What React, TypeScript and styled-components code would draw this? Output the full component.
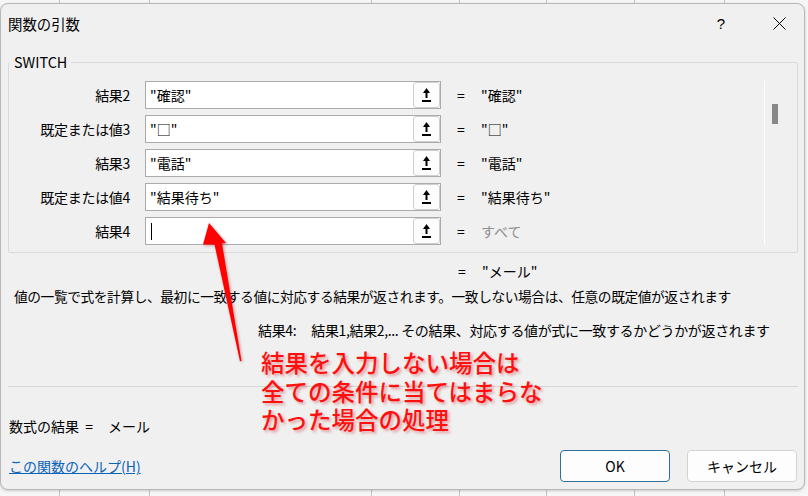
import React from "react";
import styled, { createGlobalStyle } from "styled-components";

const GlobalStyle = createGlobalStyle`
  html, body {
    margin: 0;
    padding: 0;
  }
  body {
    width: 808px;
    height: 496px;
    overflow: hidden;
    font-family: "Noto Sans CJK JP", "Noto Sans", sans-serif;
    color: #000;
  }
`;

// columns of the spreadsheet that shows behind the dialog
const sheetColumns = [59, 149, 371, 459, 546, 634, 724];
const sheetGrid = sheetColumns
  .map((x) => `linear-gradient(to right, transparent ${x}px, #c4c4c4 ${x}px, #c4c4c4 ${x + 1}px, transparent ${x + 1}px)`)
  .join(", ");

const Sheet = styled.div`
  width: 808px;
  height: 496px;
  box-sizing: border-box;
  padding: 3px 3px 6px 0;
  background-color: #f6f6f6;
  background-image: ${sheetGrid};
`;

const Dialog = styled.div`
  position: relative;
  width: 805px;
  height: 487px;
  box-sizing: border-box;
  display: flex;
  flex-direction: column;
  background: #f0f0f0;
  border: 1px solid #b8b8b8;
  border-radius: 8px;
  box-shadow: 0 1px 3px rgba(0, 0, 0, 0.18);
  overflow: hidden;
`;

const TitleBar = styled.div`
  height: 38px;
  display: flex;
  align-items: center;
  padding-left: 7px;
  flex-shrink: 0;
`;

const Title = styled.div`
  flex: 1;
  font-size: 14.4px;
`;

const CaptionButton = styled.div<{ $gap?: number }>`
  width: 46px;
  height: 38px;
  margin-right: ${(p) => p.$gap ?? 0}px;
  display: flex;
  align-items: center;
  justify-content: center;
  font-size: 15px;
  font-family: "Liberation Sans", sans-serif;
`;

const Body = styled.div`
  flex: 1;
  display: flex;
  flex-direction: column;
  padding: 0 6px 7px 7px;
  font-size: 14px;
`;

const Group = styled.fieldset`
  margin: 10px 0 0 0;
  padding: 0 0 7px 0;
  border: 1px solid #dadada;
  border-radius: 2px;
  min-width: 0;
`;

const Legend = styled.legend`
  margin-left: 1px;
  padding: 0 4px;
  font-size: 14.4px;
  line-height: 20px;
`;

const GroupInner = styled.div`
  display: flex;
  padding-top: 9px;
`;

const Rows = styled.div`
  flex: 1;
  display: flex;
  flex-direction: column;
  gap: 6px;
`;

const Row = styled.div`
  height: 28px;
  display: flex;
  align-items: center;
`;

const Label = styled.div`
  width: 121px;
  text-align: right;
  white-space: nowrap;
  letter-spacing: -0.3px;
`;

const Field = styled.div`
  margin-left: 15px;
  width: 296px;
  height: 28px;
  box-sizing: border-box;
  display: flex;
  align-items: center;
  background: #fff;
  border: 1px solid #ababab;
`;

const FieldText = styled.div`
  flex: 1;
  padding-left: 4px;
  white-space: nowrap;
  display: flex;
  align-items: center;
`;

const Caret = styled.span`
  display: inline-block;
  width: 1px;
  height: 17px;
  background: #000;
  margin-left: 1px;
`;

const RefButton = styled.div`
  width: 27px;
  height: 26px;
  box-sizing: border-box;
  display: flex;
  align-items: center;
  justify-content: center;
  background: #fdfdfd;
  border: 1px solid #cfcfcf;
  border-radius: 3px;
`;

const Equals = styled.div`
  margin-left: 16px;
  width: 24px;
`;

const Value = styled.div<{ $muted?: boolean }>`
  color: ${(p) => (p.$muted ? "#8e8e8e" : "#000")};
  white-space: nowrap;
`;

const ScrollTrack = styled.div`
  width: 15px;
  height: 164px;
  margin-right: 17px;
  border-left: 1px solid #ffffff;
`;

const ScrollThumb = styled.div`
  width: 6px;
  height: 20px;
  margin: 23px 0 0 7px;
  background: #888;
`;

const TextLine = styled.div<{ $indent?: number; $top?: number }>`
  align-self: flex-start;
  height: 20px;
  display: flex;
  align-items: center;
  white-space: nowrap;
  margin-left: ${(p) => p.$indent ?? 6}px;
  margin-top: ${(p) => p.$top ?? 0}px;
`;

const Description = styled(TextLine)`
  font-size: 13.75px;
  letter-spacing: -0.45px;
`;

const ArgHelp = styled(TextLine)`
  letter-spacing: -0.35px;
`;

const ArgName = styled.span`
  margin-right: 15px;
`;

const FormulaValue = styled.span`
  margin-left: 15px;
`;

const Separator = styled.div`
  margin-top: auto;
  height: 1px;
  background: #d6d6d6;
`;

const Footer = styled.div`
  margin-top: 14px;
  display: flex;
  align-items: center;
  padding-right: 1px;
`;

const HelpLink = styled.a`
  flex: 1;
  color: #0b63b8;
  text-decoration: underline;
  padding-left: 1px;
  cursor: pointer;
`;

const Button = styled.button<{ $primary?: boolean }>`
  width: 110px;
  height: 32px;
  margin-left: 17px;
  box-sizing: border-box;
  background: #fdfdfd;
  border: 1px solid ${(p) => (p.$primary ? "#2f6f9c" : "#d3d3d3")};
  border-radius: 4px;
  font-family: "Noto Sans CJK JP", "Noto Sans", sans-serif;
  font-size: 14px;
  color: #000;
  padding: 0;
`;

const Arrow = styled.svg`
  position: absolute;
  left: 195px;
  top: 212px;
  overflow: visible;
`;

const Note = styled.div`
  position: absolute;
  left: 260px;
  top: 344px;
  font-size: 23.5px;
  line-height: 28.5px;
  color: #ff1010;
  font-weight: 500;
  white-space: nowrap;
  text-shadow: 2px 2px 3px rgba(190, 0, 0, 0.35);
`;

function RefIcon() {
  return (
    <svg width="9" height="16" viewBox="0 0 9 16">
      <polygon points="4.5,1 8,6 1,6" fill="#000" />
      <rect x="3.5" y="5" width="2" height="6" fill="#000" />
      <rect x="0" y="13" width="9" height="2" fill="#000" />
    </svg>
  );
}

type Arg = { label: string; text: string; result: string; muted?: boolean; active?: boolean };

const args: Arg[] = [
  { label: "結果2", text: "\"確認\"", result: "\"確認\"" },
  { label: "既定または値3", text: "\"□\"", result: "\"□\"" },
  { label: "結果3", text: "\"電話\"", result: "\"電話\"" },
  { label: "既定または値4", text: "\"結果待ち\"", result: "\"結果待ち\"" },
  { label: "結果4", text: "", result: "すべて", muted: true, active: true },
];

export default function App() {
  return (
    <>
      <GlobalStyle />
      <Sheet>
        <Dialog>
          <TitleBar>
            <Title>関数の引数</Title>
            <CaptionButton $gap={12}>?</CaptionButton>
            <CaptionButton $gap={2}>
              <svg width="13" height="13" viewBox="0 0 13 13">
                <path d="M0.5 0.5 L12.5 12.5 M12.5 0.5 L0.5 12.5" stroke="#000" strokeWidth="1" />
              </svg>
            </CaptionButton>
          </TitleBar>
          <Body>
            <Group>
              <Legend>SWITCH</Legend>
              <GroupInner>
                <Rows>
                  {args.map((a) => (
                    <Row key={a.label}>
                      <Label>{a.label}</Label>
                      <Field>
                        <FieldText>
                          {a.active ? <Caret /> : a.text}
                        </FieldText>
                        <RefButton>
                          <RefIcon />
                        </RefButton>
                      </Field>
                      <Equals>=</Equals>
                      <Value $muted={a.muted}>{a.result}</Value>
                    </Row>
                  ))}
                </Rows>
                <ScrollTrack>
                  <ScrollThumb />
                </ScrollTrack>
              </GroupInner>
            </Group>
            <TextLine $indent={450} $top={8}>
              <Equals style={{ marginLeft: 0 }}>=</Equals>
              <Value>"メール"</Value>
            </TextLine>
            <Description $indent={6} $top={5}>
              値の一覧で式を計算し、最初に一致する値に対応する結果が返されます。一致しない場合は、任意の既定値が返されます
            </Description>
            <ArgHelp $indent={250} $top={14}>
              <ArgName>結果4:</ArgName>
              結果1,結果2,... その結果、対応する値が式に一致するかどうかが返されます
            </ArgHelp>
            <Separator />
            <TextLine $indent={1} $top={29}>
              数式の結果&nbsp;&nbsp;=
              <FormulaValue>メール</FormulaValue>
            </TextLine>
            <Footer>
              <HelpLink>この関数のヘルプ(H)</HelpLink>
              <Button $primary>OK</Button>
              <Button>キャンセル</Button>
            </Footer>
          </Body>
          <Arrow width="55" height="150" viewBox="0 0 55 150">
            <polygon
              points="13,7 30,27 26,27.5 45.5,145 44,145.3 18.5,28.5 7,28.5"
              fill="#ff0000"
              style={{ filter: "drop-shadow(1px 1px 1.5px rgba(150,0,0,0.4))" }}
            />
          </Arrow>
          <Note>
            結果を入力しない場合は
            <br />
            全ての条件に当てはまらな
            <br />
            かった場合の処理
          </Note>
        </Dialog>
      </Sheet>
    </>
  );
}
